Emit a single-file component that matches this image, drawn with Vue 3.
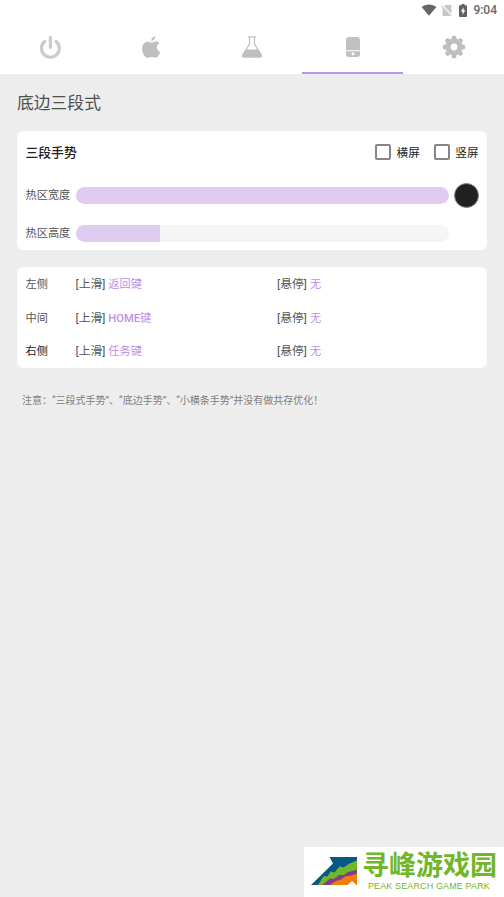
<script setup>
import { ref } from 'vue'

const tabs = ['power', 'apple', 'flask', 'phone', 'gear']
const active = ref('phone')
const orientations = ref([
  { label: '横屏', checked: false },
  { label: '竖屏', checked: false },
])
const sliders = ref([
  { label: '热区宽度', value: 100, swatch: true },
  { label: '热区高度', value: 22.6, swatch: false },
])
const zones = [
  { name: '左侧', swipe: '返回键', hover: '无' },
  { name: '中间', key: 'HOME', swipe: '键', hover: '无' },
  { name: '右侧', swipe: '任务键', hover: '无', strong: true },
]
</script>

<template>
  <div class="screen">
    <header class="top">
      <div class="status">
        <svg class="wifi" viewBox="0 0 16 12"><path d="M.6 3C4.800-.5 11.200-.5 15.400 3L8 11.800z" fill="#666" /></svg>
        <svg class="sim" viewBox="0 0 12 13">
          <path d="M4.200 1H9.500a1 1 0 0 1 1 1V9.800L3 2.100zM1.500 3.300L9.600 12H2.500a1 1 0 0 1-1-1z" fill="#c6c6c6" />
          <path d="M.5 1.400L11 12.300" stroke="#b4b4b4" stroke-width=".8" />
        </svg>
        <svg class="battery" viewBox="0 0 8 13">
          <path d="M2.500 0h3v1.200H7a1 1 0 0 1 1 1V12a1 1 0 0 1-1 1H1a1 1 0 0 1-1-1V2.200a1 1 0 0 1 1-1h1.500z" fill="#606060" />
          <path d="M4.600 3.200L1.800 7.600h1.800v3.200l2.700-4.500H4.600z" fill="#fff" />
        </svg>
        <span class="clock">9:04</span>
      </div>
      <nav class="tabs">
        <button v-for="tab in tabs" :key="tab" class="tab" :class="{ active: active === tab }" @click="active = tab">
          <svg v-if="tab === 'power'" class="icon" viewBox="0 0 24 24" fill="none" stroke="#cbcbcb" stroke-width="3.200" stroke-linecap="round">
            <path d="M12.400 2.400V12.400M6.700 6.500A8.900 8.900 0 1 0 18.100 6.500" />
          </svg>
          <svg v-else-if="tab === 'apple'" class="icon" viewBox="0 0 24 24" fill="#bfbfbf">
            <path d="M20.500 8.300c-1.800 1-2.600 2.300-2.600 4.100 0 2.100 1.200 3.700 3.300 4.500-.7 2.200-2.800 5.800-4.900 5.800-1.400 0-2-.7-3.700-.7-1.800 0-2.500.8-3.800.8-2.600 0-5.700-4.700-5.700-9.100 0-4.700 2.900-7 5.900-7 1.700 0 2.900 1.100 3.900 1.100.9 0 2.400-1.200 4.400-1.200 1.100 0 2.500.5 3.200 1.700zM12.200 5.800C12.200 3.400 14.100 1.400 16 1.200 16.400 3.700 14.300 5.800 12.200 5.800z" />
          </svg>
          <svg v-else-if="tab === 'flask'" class="icon" viewBox="0 0 24 24">
            <path d="M8.300 1.900h7.400M9.500 2v7L2.800 19.800c-.7 1.300-.1 2.200 1.200 2.200h16c1.300 0 1.900-.9 1.200-2.200L14.500 9V2" fill="none" stroke="#c2c2c2" stroke-width="1.300" stroke-linecap="round" stroke-linejoin="round" />
            <path d="M6 14.500h12l3.500 5.400c.6 1.200 0 2.100-1.300 2.100H3.800c-1.300 0-1.900-.9-1.300-2.100z" fill="#bfbfbf" />
          </svg>
          <svg v-else-if="tab === 'phone'" class="icon" viewBox="0 0 24 24">
            <path d="M8 2h8A3 3 0 0 1 19 5V15.200H5V5A3 3 0 0 1 8 2z" fill="#c1c1c1" />
            <path d="M5 16.300h14V19a3 3 0 0 1-3 3H8a3 3 0 0 1-3-3z" fill="#c1c1c1" />
            <circle cx="12" cy="19" r="1.400" fill="#fff" />
          </svg>
          <svg v-else class="icon" viewBox="0 0 24 24">
            <g fill="#bfbfbf">
              <circle cx="12" cy="12" r="8.500" />
              <rect v-for="n in 8" :key="n" x="9.600" y=".7" width="4.800" height="6" rx="1.900" :transform="`rotate(${n * 45} 12 12)`" />
            </g>
            <circle cx="12" cy="12" r="3.400" fill="#fff" />
          </svg>
        </button>
      </nav>
    </header>

    <main class="content">
      <h1 class="title">底边三段式</h1>
      <section class="card">
        <div class="card-head">
          <h2 class="card-title">三段手势</h2>
          <label v-for="o in orientations" :key="o.label" class="check">
            <input v-model="o.checked" type="checkbox" class="box" />
            <span>{{ o.label }}</span>
          </label>
        </div>
        <div v-for="s in sliders" :key="s.label" class="slider">
          <span class="slider-label">{{ s.label }}</span>
          <div class="track"><div class="fill" :style="{ width: s.value + '%' }"></div></div>
          <div v-if="s.swatch" class="swatch"></div>
        </div>
      </section>

      <section class="card zones">
        <div v-for="z in zones" :key="z.name" class="zone">
          <span class="zone-name" :class="{ strong: z.strong }">{{ z.name }}</span>
          <span class="action">[上滑] <em><b v-if="z.key">{{ z.key }}</b>{{ z.swipe }}</em></span>
          <span class="action">[悬停] <em>{{ z.hover }}</em></span>
        </div>
      </section>

      <p class="note">注意：“三段式手势”、“底边手势”、“小横条手势”并没有做共存优化！</p>
    </main>

    <aside class="brand">
      <svg class="brand-mark" viewBox="0 0 46 30">
        <path d="M18.500 1H46V29H0L22 7.500z" fill="#075887" />
        <path d="M7 29l5-8 1.500-1 3 .5 3-5 4 1 5-6 4 1 6-4 7.500-3V29z" fill="#72b62b" />
        <path d="M11 29l4-3 4-3.500 4 .5 5-4 5 0 4-3 9-2V29z" fill="#813b91" />
        <path d="M19 29l6-4 5-1.500 4-3 6-1 6-2V29z" fill="#f27c08" />
        <path d="M36 29.500l5-4.500 5 4.500z" fill="#fff" />
      </svg>
      <div class="brand-text">
        <div class="brand-name">寻峰游戏园</div>
        <div class="brand-sub">PEAK SEARCH GAME PARK</div>
      </div>
    </aside>
  </div>
</template>

<style>
body {
  background: #ededed;
}
</style>

<style scoped>
* {
  box-sizing: border-box;
}
.screen {
  position: relative;
  height: 897px;
  overflow: hidden;
  background: #ededed;
  font-family: Roboto, "Noto Sans CJK SC", sans-serif;
  font-size: 11.2px;
  color: #555;
}
.top {
  height: 74px;
  background: #fff;
}
.status {
  display: flex;
  justify-content: flex-end;
  align-items: center;
  height: 20px;
  padding-right: 7px;
}
.wifi {
  width: 16px;
  height: 12px;
  margin-right: 4px;
}
.sim {
  width: 12px;
  height: 13px;
  margin-right: 6px;
}
.battery {
  width: 8px;
  height: 13px;
  margin-right: 6px;
}
.clock {
  font-size: 12px;
  font-weight: 500;
  line-height: 20px;
  color: #666;
}
.tabs {
  display: grid;
  grid-template-columns: repeat(5, 1fr);
  height: 54px;
}
.tab {
  display: flex;
  justify-content: center;
  align-items: center;
  padding: 2px 0 0;
  border: 0;
  border-bottom: 2px solid transparent;
  background: none;
}
.tab.active {
  border-bottom-color: #bd93e6;
}
.icon {
  width: 24px;
  height: 24px;
}
.content {
  padding: 0 17px;
}
.title {
  margin: 0;
  height: 57px;
  padding-top: 1px;
  line-height: 57px;
  font-size: 16.8px;
  font-weight: 400;
  color: #505050;
}
.card {
  height: 119px;
  padding: 0 8.500px;
  border-radius: 6px;
  background: #fff;
}
.card-head {
  display: flex;
  align-items: center;
  height: 45px;
  padding-bottom: 3px;
  gap: 14px;
}
.card-title {
  flex: 1;
  margin: 0;
  padding-bottom: 1px;
  font-size: 12.8px;
  font-weight: 500;
  color: #202020;
}
.check {
  display: flex;
  align-items: center;
  gap: 5.500px;
  font-size: 11.600px;
  color: #222;
}
.box {
  appearance: none;
  width: 16px;
  height: 16px;
  margin: 0;
  border: 2px solid #868686;
  border-radius: 2px;
}
.slider {
  display: flex;
  align-items: center;
  height: 38px;
}
.slider-label {
  width: 50px;
  padding-bottom: 2px;
}
.track {
  width: 373px;
  height: 17px;
  border-radius: 9px;
  background: #f5f5f5;
  overflow: hidden;
}
.fill {
  height: 100%;
  background: #e0cbf3;
}
.swatch {
  width: 25px;
  height: 25px;
  margin-left: 5px;
  border: 1px solid #888;
  border-radius: 50%;
  background: #202020;
}
.zones {
  height: 101px;
  margin-top: 17px;
}
.zone {
  display: grid;
  grid-template-columns: 50px 201.600px 1fr;
  align-items: center;
  height: 33.600px;
  padding-bottom: 1px;
}
.zone-name.strong {
  color: #222;
}
.action {
  padding-bottom: 1px;
  font-size: 11.800px;
}
.action em {
  font-size: 11.200px;
  font-style: normal;
  font-weight: 400;
  color: #bd8fe8;
}
.action b {
  font-weight: 500;
}
.note {
  margin: 24px 0 0 5px;
  font-size: 10px;
  line-height: 17px;
  color: #808080;
}
.brand {
  position: absolute;
  right: 0;
  bottom: 0;
  display: flex;
  width: 200px;
  height: 50px;
  background: #fff;
}
.brand-mark {
  width: 46px;
  height: 30px;
  margin: 9px 4px 0 7px;
}
.brand-text {
  white-space: nowrap;
  color: #72b62b;
}
.brand-name {
  height: 34px;
  padding-left: 1px;
  font-size: 27px;
  font-weight: 700;
  line-height: 39px;
}
.brand-sub {
  padding-left: 7px;
  font-family: "Liberation Sans", sans-serif;
  font-size: 9px;
  line-height: 10px;
  letter-spacing: .12px;
}
</style>
